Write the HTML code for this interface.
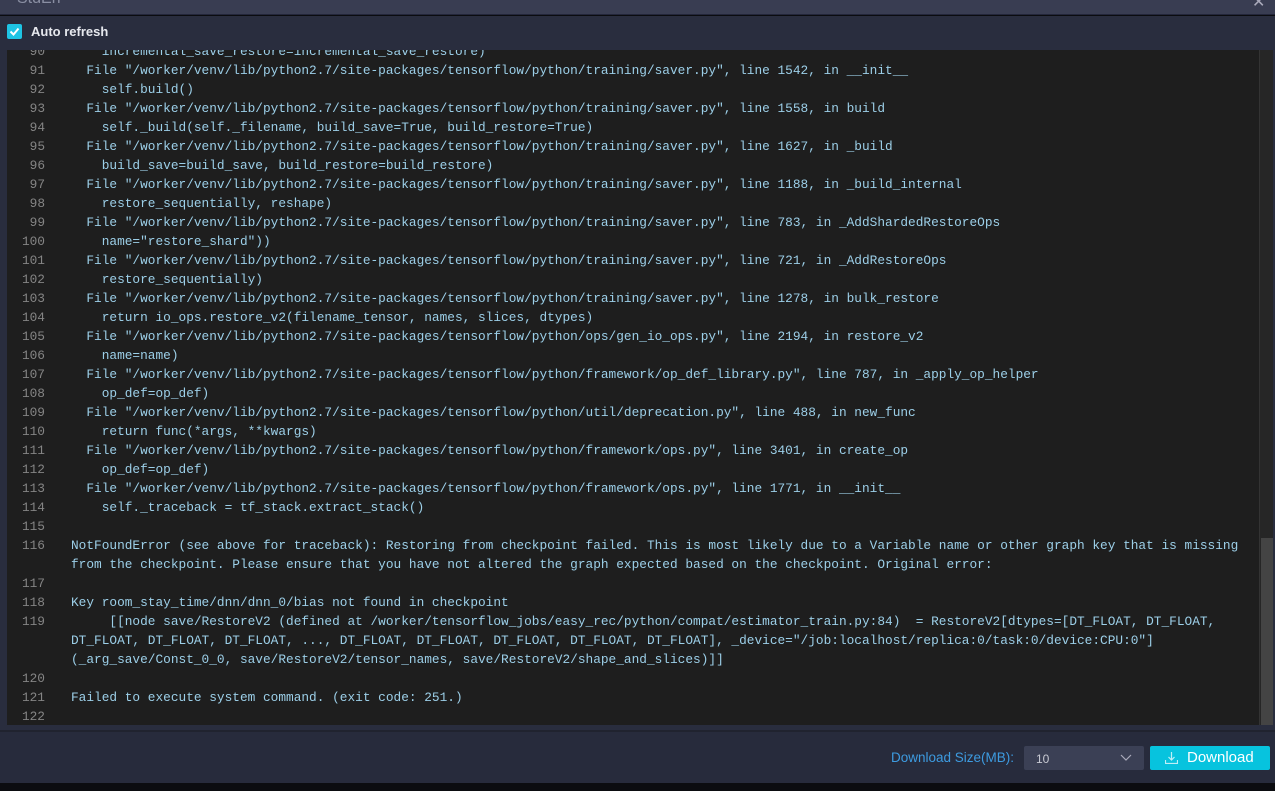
<!DOCTYPE html>
<html><head><style>
*{margin:0;padding:0;box-sizing:border-box}
body{width:1275px;height:791px;background:#0b0c10;overflow:hidden;position:relative;font-family:"Liberation Sans",sans-serif}
.title{position:absolute;left:0;top:0;width:1275px;height:15px;background:#393d52;border-bottom:1px solid #23263a;overflow:hidden}
.title .t{position:absolute;left:17px;top:-10px;color:#8a8fa3;font-size:16px}
.title .x{position:absolute;left:1252px;top:-8px;color:#aab;font-size:16px}
.modal{position:absolute;left:0;top:16px;width:1275px;height:767px;background:#292d3e}
.chk{position:absolute;left:7px;top:24px;width:15px;height:15px;background:#1ec4e4;border-radius:2px}
.lbl{position:absolute;left:31px;top:24px;color:#e6e8ee;font-size:13px;font-weight:bold}
.ed{position:absolute;left:7px;top:50px;width:1266px;height:675px;background:#1e1e1e;overflow:hidden}
.code{position:absolute;left:0;top:-8px;font-family:"Liberation Mono",monospace;font-size:12.8px;line-height:19px;color:#9ccfe8}
.r{display:flex;white-space:pre;height:19px}
.n{width:38px;text-align:right;color:#858585;margin-right:26px;flex:none}
.sb{position:absolute;left:1252px;top:0;width:14px;height:675px;background:#262626;border-left:1px solid #333}
.th{position:absolute;left:1px;top:488px;width:13px;height:187px;background:#444}
.foot{position:absolute;left:0;top:730px;width:1275px;height:53px;background:#272b3c;border-top:2px solid #20232f}
.dl{position:absolute;left:891px;top:750px;color:#3d9be0;font-size:13.5px}
.sel{position:absolute;left:1024px;top:746px;width:120px;height:24px;background:#3b4055;border-radius:2px;color:#c8cad3;font-size:12px;padding:6px 0 0 12px}
.sel svg{position:absolute;right:12px;top:8px}
.btn{position:absolute;left:1150px;top:746px;width:120px;height:24px;background:#07c3de;border-radius:2px;color:#fff;font-size:15px;padding:3px 0 0 37px}
</style></head><body>
<div class="title"><span class="t">StdErr</span><span class="x">✕</span></div>
<div class="modal"></div>
<div class="chk"><svg width="15" height="15"><path d="M3.5 7.5l3 3 5-6" stroke="#fff" stroke-width="2" fill="none"/></svg></div>
<div class="lbl">Auto refresh</div>
<div class="ed"><div class="code"><div class="r"><span class="n">90</span>    incremental_save_restore=incremental_save_restore)</div><div class="r"><span class="n">91</span>  File "/worker/venv/lib/python2.7/site-packages/tensorflow/python/training/saver.py", line 1542, in __init__</div><div class="r"><span class="n">92</span>    self.build()</div><div class="r"><span class="n">93</span>  File "/worker/venv/lib/python2.7/site-packages/tensorflow/python/training/saver.py", line 1558, in build</div><div class="r"><span class="n">94</span>    self._build(self._filename, build_save=True, build_restore=True)</div><div class="r"><span class="n">95</span>  File "/worker/venv/lib/python2.7/site-packages/tensorflow/python/training/saver.py", line 1627, in _build</div><div class="r"><span class="n">96</span>    build_save=build_save, build_restore=build_restore)</div><div class="r"><span class="n">97</span>  File "/worker/venv/lib/python2.7/site-packages/tensorflow/python/training/saver.py", line 1188, in _build_internal</div><div class="r"><span class="n">98</span>    restore_sequentially, reshape)</div><div class="r"><span class="n">99</span>  File "/worker/venv/lib/python2.7/site-packages/tensorflow/python/training/saver.py", line 783, in _AddShardedRestoreOps</div><div class="r"><span class="n">100</span>    name="restore_shard"))</div><div class="r"><span class="n">101</span>  File "/worker/venv/lib/python2.7/site-packages/tensorflow/python/training/saver.py", line 721, in _AddRestoreOps</div><div class="r"><span class="n">102</span>    restore_sequentially)</div><div class="r"><span class="n">103</span>  File "/worker/venv/lib/python2.7/site-packages/tensorflow/python/training/saver.py", line 1278, in bulk_restore</div><div class="r"><span class="n">104</span>    return io_ops.restore_v2(filename_tensor, names, slices, dtypes)</div><div class="r"><span class="n">105</span>  File "/worker/venv/lib/python2.7/site-packages/tensorflow/python/ops/gen_io_ops.py", line 2194, in restore_v2</div><div class="r"><span class="n">106</span>    name=name)</div><div class="r"><span class="n">107</span>  File "/worker/venv/lib/python2.7/site-packages/tensorflow/python/framework/op_def_library.py", line 787, in _apply_op_helper</div><div class="r"><span class="n">108</span>    op_def=op_def)</div><div class="r"><span class="n">109</span>  File "/worker/venv/lib/python2.7/site-packages/tensorflow/python/util/deprecation.py", line 488, in new_func</div><div class="r"><span class="n">110</span>    return func(*args, **kwargs)</div><div class="r"><span class="n">111</span>  File "/worker/venv/lib/python2.7/site-packages/tensorflow/python/framework/ops.py", line 3401, in create_op</div><div class="r"><span class="n">112</span>    op_def=op_def)</div><div class="r"><span class="n">113</span>  File "/worker/venv/lib/python2.7/site-packages/tensorflow/python/framework/ops.py", line 1771, in __init__</div><div class="r"><span class="n">114</span>    self._traceback = tf_stack.extract_stack()</div><div class="r"><span class="n">115</span></div><div class="r"><span class="n">116</span>NotFoundError (see above for traceback): Restoring from checkpoint failed. This is most likely due to a Variable name or other graph key that is missing</div><div class="r"><span class="n"></span>from the checkpoint. Please ensure that you have not altered the graph expected based on the checkpoint. Original error:</div><div class="r"><span class="n">117</span></div><div class="r"><span class="n">118</span>Key room_stay_time/dnn/dnn_0/bias not found in checkpoint</div><div class="r"><span class="n">119</span>     [[node save/RestoreV2 (defined at /worker/tensorflow_jobs/easy_rec/python/compat/estimator_train.py:84)  = RestoreV2[dtypes=[DT_FLOAT, DT_FLOAT,</div><div class="r"><span class="n"></span>DT_FLOAT, DT_FLOAT, DT_FLOAT, ..., DT_FLOAT, DT_FLOAT, DT_FLOAT, DT_FLOAT, DT_FLOAT], _device="/job:localhost/replica:0/task:0/device:CPU:0"]</div><div class="r"><span class="n"></span>(_arg_save/Const_0_0, save/RestoreV2/tensor_names, save/RestoreV2/shape_and_slices)]]</div><div class="r"><span class="n">120</span></div><div class="r"><span class="n">121</span>Failed to execute system command. (exit code: 251.)</div><div class="r"><span class="n">122</span></div></div><div class="sb"><div class="th"></div></div></div>
<div class="foot"></div>
<div class="dl">Download Size(MB):</div>
<div class="sel">10<svg width="12" height="7"><path d="M1 1l5 5 5-5" stroke="#aab" stroke-width="1.2" fill="none"/></svg></div>
<div class="btn"><svg style="position:absolute;left:15px;top:6px" width="13" height="12"><path d="M6.5 0v8M3.5 5l3 3 3-3M0.5 8v3.5h12V8" stroke="#bfeef6" stroke-width="1.2" fill="none"/></svg>Download</div>
</body></html>
